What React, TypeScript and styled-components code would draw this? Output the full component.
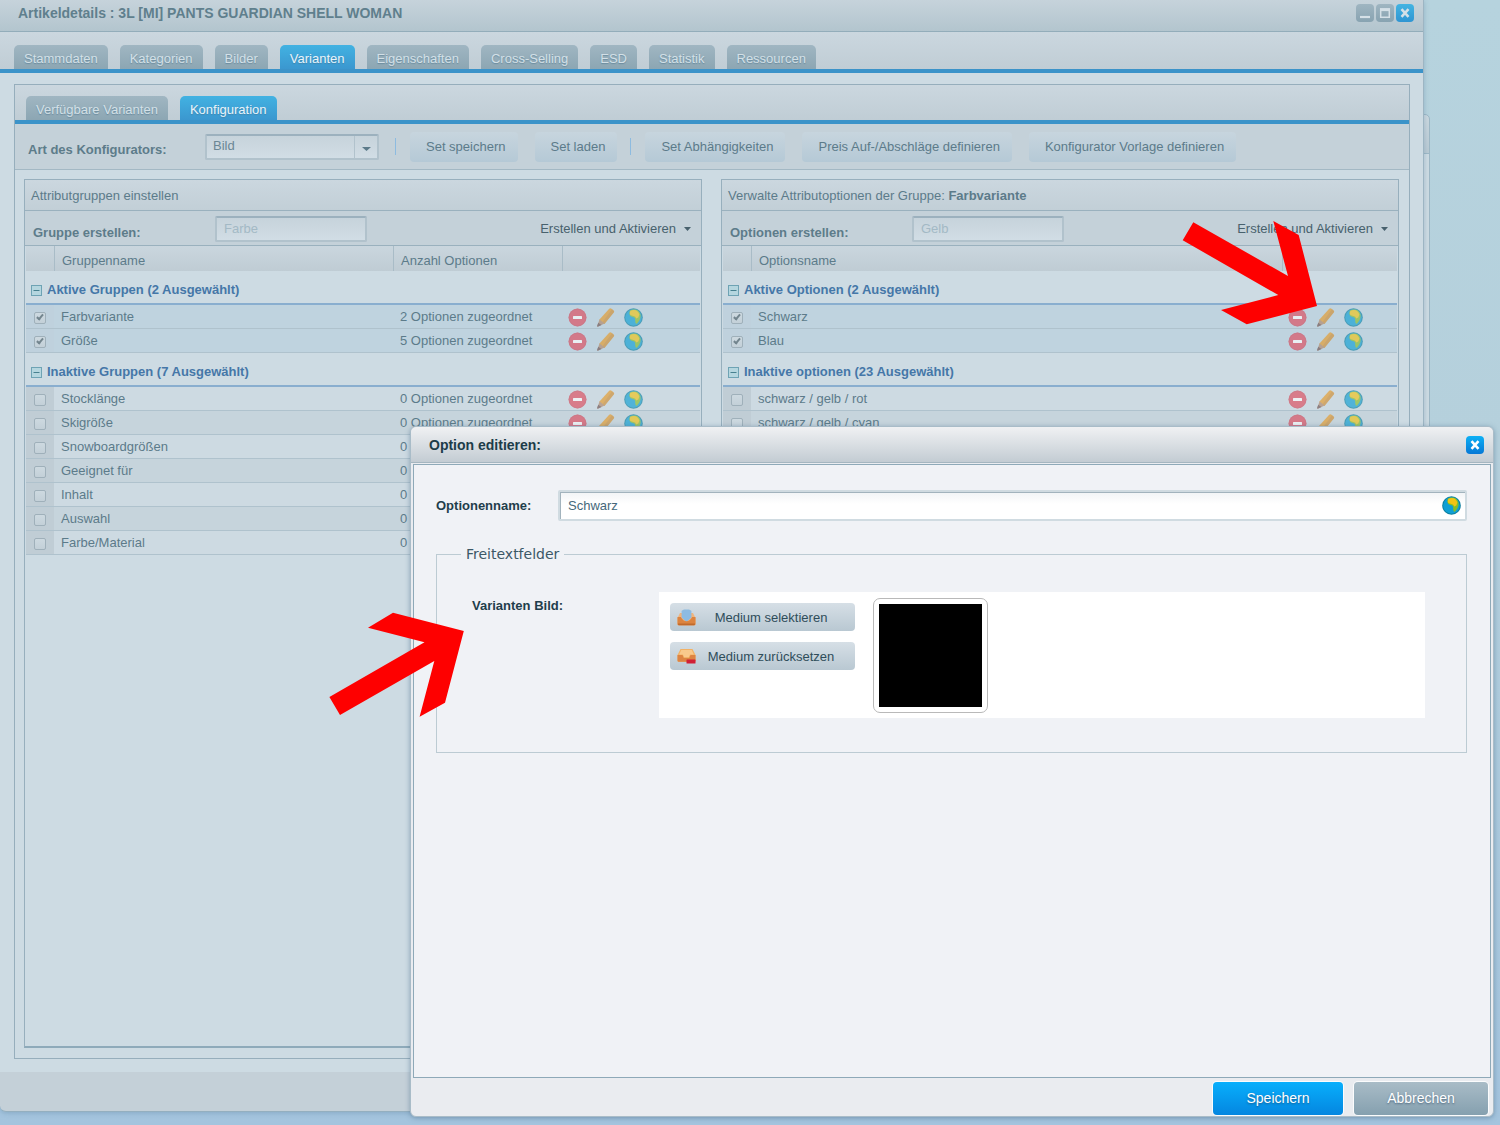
import React from "react";
import styled, { createGlobalStyle, css } from "styled-components";

const GlobalStyle = createGlobalStyle`
  *, *::before, *::after { box-sizing: border-box; }
  body {
    margin: 0;
    font-family: "Liberation Sans", Arial, Helvetica, sans-serif;
    font-size: 13px;
    line-height: 16px;
    color: #5c7b8a;
  }
  button, input, select { font: inherit; color: inherit; margin: 0; }
  button { cursor: pointer; border: 0; background: none; padding: 0; }
`;

/* ---------- Desktop and main window ---------- */

const Desktop = styled.div`
  position: relative;
  display: flex;
  flex-direction: column;
  min-height: 100vh;
  padding: 0 76px 13px 0;
  background: linear-gradient(#b6d3de 0%, #b5d0dc 40%, #a4c4de 100%);
  overflow: hidden;
`;

const BackWindow = styled.div`
  position: absolute;
  top: 114px;
  right: 70px;
  bottom: 120px;
  width: 60px;
  border: 1px solid #9db8c6;
  border-radius: 5px;
  background: linear-gradient(#cbd8e0, #b9cad3 38px, #9db8c6 38px, #9db8c6 39px, #cddbe3 39px);
`;

const Window = styled.main`
  position: relative;
  flex: 1;
  display: flex;
  flex-direction: column;
  border-right: 1px solid #9db5c3;
  border-bottom: 1px solid #94afbf;
  border-radius: 0 0 6px 6px;
  background: #c4d0d8;
  box-shadow: 0 1px 5px rgba(80, 120, 150, 0.35);
`;

const WindowHeader = styled.header`
  display: flex;
  align-items: center;
  height: 32px;
  padding: 0 9px 5px 18px;
  border-bottom: 1px solid #93adba;
  background: linear-gradient(#c6d3db, #b3c5ce);
`;

const WindowTitle = styled.h1`
  flex: 1;
  margin: 0;
  font-size: 14px;
  line-height: 16px;
  font-weight: bold;
  color: #5f7f8d;
`;

const ToolGroup = styled.div`
  display: flex;
  gap: 2px;
`;

const ToolButton = styled.button<{ $tone: "grey" | "blue" | "bright" }>`
  display: grid;
  place-items: center;
  width: 18px;
  height: 18px;
  border-radius: 4px;
  color: ${(p) => (p.$tone === "bright" ? "#fff" : "#d5e0e7")};
  background: ${(p) =>
    p.$tone === "grey"
      ? "linear-gradient(#9fb5c1, #88a3b1)"
      : p.$tone === "blue"
        ? "linear-gradient(#43b4e2, #2f95d2)"
        : "linear-gradient(#0cb0f5, #0678d6)"};
`;

/* ---------- Tabs ---------- */

const TabBar = styled.nav<{ $inner?: boolean }>`
  display: flex;
  align-items: flex-end;
  gap: 12px;
  height: ${(p) => (p.$inner ? 39 : 41)}px;
  padding-left: ${(p) => (p.$inner ? 11 : 14)}px;
  border-bottom: 4px solid #3b93c9;
  background: linear-gradient(#cbd7df, #c0cdd5);
`;

const Tab = styled.button<{ $active?: boolean }>`
  height: 24px;
  padding: 3px 10px 0;
  border-radius: 5px 5px 0 0;
  color: ${(p) => (p.$active ? "#e8f4fb" : "#d3e0e7")};
  background: ${(p) => (p.$active ? "linear-gradient(#42b2e2, #3b97cf)" : "linear-gradient(#a0b6c2, #8ca6b3)")};
  text-shadow: 0 1px 1px rgba(70, 110, 135, 0.5);
  white-space: nowrap;
`;

const WindowBody = styled.div`
  flex: 1;
  display: flex;
  padding: 11px 13px 13px 14px;
  background: #cddbe3;
`;

const Container = styled.section`
  flex: 1;
  display: flex;
  flex-direction: column;
  min-width: 0;
  border: 1px solid #96aebc;
`;

const WindowFooter = styled.footer`
  height: 39px;
`;

/* ---------- Configurator toolbar ---------- */

const Toolbar = styled.div`
  display: flex;
  align-items: center;
  height: 46px;
  padding: 0 13px;
  border-bottom: 1px solid #a3b8c4;
  background: #c4d1d9;
`;

const FieldLabel = styled.label<{ $width: number }>`
  flex: none;
  width: ${(p) => p.$width}px;
  padding-top: 7px;
  font-weight: bold;
  color: #5d7c8a;
`;

const fieldBox = css`
  border: 2px solid #b1c2cc;
  border-top-color: #9cb1be;
  border-radius: 2px;
  background: linear-gradient(#c6d3db, #d1dde5);
`;

const SelectBox = styled.div`
  position: relative;
  flex: none;
  width: 174px;
  margin-right: 16px;
  svg {
    position: absolute;
    right: 8px;
    top: 13px;
    pointer-events: none;
  }
`;

const Select = styled.select`
  ${fieldBox}
  display: block;
  appearance: none;
  width: 100%;
  height: 26px;
  padding: 0 30px 1px 6px;
  color: #6b8795;
  background: linear-gradient(90deg, transparent calc(100% - 23px), #b1c2cc calc(100% - 23px), #b1c2cc calc(100% - 22px), transparent calc(100% - 22px)),
    linear-gradient(#c6d3db, #d1dde5);
`;

const Separator = styled.span`
  flex: none;
  width: 1px;
  height: 17px;
  margin: 0 14px 0 0;
  background: #8dbbe0;
`;

const ToolbarGroup = styled.div`
  display: flex;
  flex: none;
  gap: 17px;
  margin-right: 13px;
`;

const ToolbarButton = styled.button`
  height: 30px;
  padding: 0 12px 0 16px;
  border-radius: 4px;
  background: linear-gradient(#c7d5de, #b5c9d6);
  white-space: nowrap;
`;

/* ---------- Grid panels ---------- */

const Panels = styled.div`
  flex: 1;
  display: grid;
  grid-template-columns: 1fr 1fr;
  gap: 19px;
  padding: 9px 10px 10px 9px;
`;

const Panel = styled.section`
  min-width: 0;
  border: 1px solid #97afbd;
  border-bottom: 2px solid #8eaaba;
  padding: 0 1px;
  background: #cddbe3;
`;

const PanelTitle = styled.h2`
  margin: 0 -1px;
  height: 31px;
  padding: 8px 6px 0;
  border-bottom: 1px solid #9ab1be;
  background: linear-gradient(#cbd7df, #c2cfd7);
  font-size: 13px;
  line-height: 16px;
  font-weight: normal;
`;

const PanelToolbar = styled.div`
  display: flex;
  align-items: center;
  height: 35px;
  margin: 0 -1px;
  padding: 2px 10px 0 8px;
  border-bottom: 1px solid #9ab1be;
  background: #c4d1d9;
`;

const TextInput = styled.input`
  ${fieldBox}
  width: 152px;
  height: 26px;
  padding: 0 7px 1px;
  &::placeholder {
    color: #a3b9c5;
    opacity: 1;
  }
`;

const MenuButton = styled.button`
  display: flex;
  align-items: center;
  gap: 8px;
  margin-left: auto;
  color: #48616d;
`;

const Grid = styled.table`
  width: 100%;
  table-layout: fixed;
  border-collapse: separate;
  border-spacing: 0;
  text-align: left;
`;

const HeadCell = styled.th`
  height: 25px;
  padding: 4px 0 0 7px;
  border-left: 1px solid #a9bcc7;
  background: linear-gradient(#cad6de, #bfccd4);
  font-weight: normal;
  &:first-child { border-left: 0; }
`;

const GroupCell = styled.th`
  height: 34px;
  padding: 6px 0 0 5px;
  border-bottom: 2px solid #89aecf;
`;

const GroupToggle = styled.button`
  display: flex;
  align-items: center;
  gap: 5px;
  font-weight: bold;
  color: #4577a8;
`;

const Row = styled.tr<{ $tone: "selected" | "odd" | "even" }>`
  background: ${(p) => ({ selected: "#bfd3df", odd: "#cddae2", even: "#c6d4dc" })[p.$tone]};
  td:first-child { background: ${(p) => (p.$tone === "selected" ? "#bfd1dd" : "#c0cdd5")}; }
`;

const Cell = styled.td<{ $indent?: number }>`
  height: 24px;
  padding: 0 0 0 ${(p) => p.$indent ?? 7}px;
  border-bottom: 1px solid #afc2cd;
  white-space: nowrap;
`;

const CheckBox = styled.input`
  appearance: none;
  display: grid;
  place-items: center;
  width: 12px;
  height: 12px;
  margin: 2px 0 0;
  border: 1px solid #9fb0ba;
  border-radius: 2px;
  background: linear-gradient(#cdd9e0, #c3d0d8);
  &:checked::after {
    content: "";
    width: 4px;
    height: 7px;
    margin-top: -2px;
    border: solid #73858e;
    border-width: 0 2px 2px 0;
    transform: rotate(40deg);
  }
`;

const Actions = styled.div`
  display: flex;
  gap: 9px;
  padding-top: 1px;
  opacity: 0.65;
  button { display: block; width: 19px; height: 19px; }
  svg { display: block; }
`;

/* ---------- Edit dialog ---------- */

const Dialog = styled.section`
  position: absolute;
  top: 426px;
  right: 6px;
  bottom: 8px;
  left: 410px;
  display: flex;
  flex-direction: column;
  padding: 0 2px;
  border: 1px solid #a9bcc8;
  border-radius: 6px;
  background: #eaecf0;
  box-shadow: 0 1px 5px rgba(70, 105, 135, 0.5);
  color: #25434f;
`;

const DialogHeader = styled.header`
  display: flex;
  align-items: center;
  height: 36px;
  margin: 0 -2px 1px;
  padding: 0 9px 0 18px;
  border-bottom: 1px solid #a5b6c0;
  border-radius: 6px 6px 0 0;
  background: linear-gradient(#f0f1f3, #c3ccd3);
`;

const DialogTitle = styled.h2`
  flex: 1;
  margin: 0;
  font-size: 14px;
  line-height: 16px;
  font-weight: bold;
  color: #1d3c49;
`;

const DialogBody = styled.div`
  flex: 1;
  padding: 25px 23px 0 22px;
  border: 1px solid #8ea9b8;
  background: #f0f2f6;
`;

const FormRow = styled.div`
  display: flex;
  align-items: center;
`;

const FormLabel = styled.label<{ $width: number }>`
  flex: none;
  width: ${(p) => p.$width}px;
  font-weight: bold;
  color: #1f3e4b;
`;

const NameField = styled.div`
  flex: 1;
  display: flex;
  align-items: center;
  height: 31px;
  padding-right: 4px;
  border: 2px solid #d0dbe1;
  border-radius: 2px;
  background: linear-gradient(#f1f4f6, #fff 12px);
  box-shadow: inset 1px 1px 0 #a2b3bd;
`;

const NameInput = styled.input`
  flex: 1;
  min-width: 0;
  height: 100%;
  padding: 0 8px;
  border: 0;
  outline: 0;
  background: none;
  color: #45687a;
`;

const IconButton = styled.button`
  display: block;
  svg { display: block; }
`;

const Fieldset = styled.fieldset`
  margin: 25px 0 0 0;
  padding: 30px 41px 34px 35px;
  border: 1px solid #bccbd3;
`;

const Legend = styled.legend`
  margin-left: -11px;
  padding: 0 5px;
  font-family: "DejaVu Sans", Verdana, sans-serif;
  font-size: 14px;
  line-height: 16px;
  color: #3c5866;
`;

const MediaRow = styled.div`
  display: flex;
`;

const MediaLabel = styled.span`
  flex: none;
  width: 187px;
  padding-top: 6px;
  font-weight: bold;
  color: #1f3e4b;
`;

const MediaField = styled.div`
  flex: 1;
  display: flex;
  gap: 18px;
  height: 126px;
  padding: 6px 11px;
  background: #fff;
`;

const MediaButtons = styled.div`
  display: flex;
  flex-direction: column;
  gap: 11px;
  width: 185px;
  padding-top: 5px;
`;

const MediaButton = styled.button`
  display: flex;
  align-items: center;
  height: 28px;
  padding: 1px 9px 0 7px;
  border-radius: 4px;
  background: linear-gradient(#d6dfe6, #b9c8d2);
  color: #2f4d5a;
  span { flex: 1; text-align: center; }
`;

const Thumbnail = styled.div`
  width: 115px;
  height: 115px;
  padding: 5px;
  border: 1px solid #b9b9b9;
  border-radius: 7px;
  background: #fff;
  &::before {
    content: "";
    display: block;
    height: 100%;
    background: #000;
  }
`;

const DialogFooter = styled.footer`
  display: flex;
  justify-content: flex-end;
  gap: 11px;
  height: 38px;
  padding: 4px 3px 0 0;
`;

const FooterButton = styled.button<{ $primary?: boolean }>`
  width: ${(p) => (p.$primary ? 130 : 134)}px;
  height: 33px;
  padding-bottom: 1px;
  border-radius: 4px;
  box-shadow: 0 0 0 1px #fbfcfd;
  background: ${(p) => (p.$primary ? "linear-gradient(#08affc, #0486e0)" : "linear-gradient(#a9bcc7, #85a0af)")};
  color: #fff;
  font-size: 14px;
  text-shadow: 0 1px 2px rgba(30, 60, 90, 0.6);
`;

const Pointer = styled.svg<{ $top: number; $left?: number; $right?: number }>`
  position: absolute;
  top: ${(p) => p.$top}px;
  ${(p) => (p.$left !== undefined ? `left: ${p.$left}px;` : `right: ${p.$right}px;`)}
  pointer-events: none;
  fill: #fe0000;
`;

/* ---------- Icons ---------- */

const CaretIcon = ({ size = 7 }: { size?: number }) => (
  <svg width={size} height="4" viewBox="0 0 8 4" preserveAspectRatio="none" aria-hidden="true">
    <path d="M0 0H8L4 4Z" fill="currentColor" />
  </svg>
);

const CloseIcon = () => (
  <svg width="10" height="10" viewBox="0 0 10 10" aria-hidden="true">
    <path d="M1.5 1.2 8.5 8.8M8.5 1.2 1.5 8.8" stroke="currentColor" strokeWidth="2.6" />
  </svg>
);

const MinimizeIcon = () => (
  <svg width="12" height="12" viewBox="0 0 12 12" aria-hidden="true">
    <path d="M1 10H11" stroke="currentColor" strokeWidth="2.2" />
  </svg>
);

const MaximizeIcon = () => (
  <svg width="12" height="12" viewBox="0 0 12 12" aria-hidden="true">
    <path d="M1.700 2H10.300V10.300H1.700Z" fill="none" stroke="currentColor" strokeWidth="1.500" />
    <path d="M1 2.700H11" stroke="currentColor" strokeWidth="2.800" />
  </svg>
);

const CollapseIcon = () => (
  <svg width="11" height="11" viewBox="0 0 11 11" aria-hidden="true">
    <rect x="0.5" y="0.5" width="10" height="10" fill="#b5d6df" stroke="#6ea3b4" />
    <path d="M2.500 5.500H8.500" stroke="#47808f" />
  </svg>
);

const RemoveIcon = () => (
  <svg width="19" height="19" viewBox="0 0 19 19" aria-hidden="true">
    <circle cx="9.500" cy="9.500" r="9" fill="#de4a5c" />
    <circle cx="9.500" cy="9.500" r="8.300" fill="none" stroke="#cc4a5c" strokeWidth="0.800" />
    <rect x="5" y="8" width="9" height="3" rx="0.500" fill="#fff" />
  </svg>
);

const PencilIcon = () => (
  <svg width="19" height="19" viewBox="0 0 19 19" aria-hidden="true">
    <path d="M13 1Q14.100-.2 15.500.8L17.600 2.400Q18.600 3.400 17.700 4.600L8.400 15.900 3 12Z" fill="#e59a2a" />
    <path d="M16 1.200 18.100 3.200 17.700 4.600 8.400 15.900 6.300 14.400Z" fill="#c88734" opacity="0.700" />
    <path d="M3.600 11.500 8.600 15.600 2.200 18.600Q1 18.800 1.200 17.700Z" fill="#b0876a" />
    <path d="M2.200 14.700 5.500 17.100 2.200 18.600Q1 18.800 1.200 17.700Z" fill="#6b5050" />
  </svg>
);

const GlobeIcon = () => (
  <svg width="19" height="19" viewBox="0 0 19 19" aria-hidden="true">
    <circle cx="9.500" cy="9.500" r="9.300" fill="#0c7f9f" />
    <circle cx="9.500" cy="9.500" r="8.300" fill="#0f9fd4" />
    <path d="M6 2.400Q9 .8 12.600 1.800 16 3.400 16.600 7.300 16.800 10.500 15.300 12.600L12.900 15.800Q11.200 16 11.300 13.600L11 10.600Q10.500 8.900 8.300 9 5.600 8.600 5.500 6.600 5 4.200 6 2.400Z" fill="#86bd28" />
    <path d="M6.200 3Q9 1.300 12 2.300 14.600 3.600 15.400 6.600L14.300 9.600 12.300 10.400Q11.600 8 9.400 7.900 6 7.800 5.800 5.600Z" fill="#f2c414" />
  </svg>
);

const TrayIcon = () => (
  <svg width="19" height="17" viewBox="0 0 19 17" aria-hidden="true">
    <path d="M3 4H16L18.500 9V15Q18.500 16.200 17.300 16.200H1.700Q.5 16.200.5 15V9Z" fill="#f0b47c" />
    <path d="M4.600 1.800 7 .6H12L14.400 1.800V8.500L9.500 13 4.600 8.500Z" fill="#8dbbe2" />
    <path d="M.5 8H3.800Q6 12.200 9.500 12.200T15.200 8H18.500V15Q18.500 16.200 17.300 16.200H1.700Q.5 16.200.5 15Z" fill="#dc8440" />
    <path d="M1 14.500H18V15.200Q17.800 16.200 17 16.200H2Q1 16.200 1 15Z" fill="#c06a2c" />
  </svg>
);

const TrayRemoveIcon = () => (
  <svg width="19" height="17" viewBox="0 0 19 17" aria-hidden="true">
    <path d="M3.500 1H15.500L18.500 7V12.500Q18.500 13.700 17.300 13.700H1.700Q.5 13.700.5 12.500V7Z" fill="#f2b266" />
    <path d="M4.300 2H14.700L16.800 6.600H13L12 9H7L6 6.600H2.200Z" fill="#f9c98c" />
    <path d="M.5 7H5.500L6.800 10H12.200L13.500 7H18.500V12.500Q18.500 13.700 17.300 13.700H1.700Q.5 13.700.5 12.500Z" fill="#dd8443" />
    <rect x="9.500" y="11.500" width="9" height="4" rx="0.600" fill="#d01f35" />
  </svg>
);

/* ---------- Data ---------- */

const mainTabs = ["Stammdaten", "Kategorien", "Bilder", "Varianten", "Eigenschaften", "Cross-Selling", "ESD", "Statistik", "Ressourcen"];
const innerTabs = ["Verfügbare Varianten", "Konfiguration"];

type Item = { name: string; count?: number };
type Group = { title: string; active: boolean; items: Item[] };

const attributeGroups: Group[] = [
  {
    title: "Aktive Gruppen (2 Ausgewählt)",
    active: true,
    items: [
      { name: "Farbvariante", count: 2 },
      { name: "Größe", count: 5 },
    ],
  },
  {
    title: "Inaktive Gruppen (7 Ausgewählt)",
    active: false,
    items: ["Stocklänge", "Skigröße", "Snowboardgrößen", "Geeignet für", "Inhalt", "Auswahl", "Farbe/Material"].map((name) => ({ name, count: 0 })),
  },
];

const optionGroups: Group[] = [
  { title: "Aktive Optionen (2 Ausgewählt)", active: true, items: [{ name: "Schwarz" }, { name: "Blau" }] },
  { title: "Inaktive optionen (23 Ausgewählt)", active: false, items: [{ name: "schwarz / gelb / rot" }, { name: "schwarz / gelb / cyan" }] },
];

/* ---------- Composition ---------- */

const RowActions = () => (
  <Actions>
    <button type="button" aria-label="Löschen"><RemoveIcon /></button>
    <button type="button" aria-label="Bearbeiten"><PencilIcon /></button>
    <button type="button" aria-label="Übersetzen"><GlobeIcon /></button>
  </Actions>
);

const Column = styled.col<{ $width?: number }>`
  width: ${(p) => (p.$width ? `${p.$width}px` : "auto")};
`;

function GroupedGrid({ nameHeader, countHeader, groups }: { nameHeader: string; countHeader?: string; groups: Group[] }) {
  return (
    <Grid>
      <colgroup>
        <Column $width={28} />
        <Column />
        {countHeader && <Column $width={169} />}
        <Column $width={countHeader ? 138 : 115} />
      </colgroup>
      <thead>
        <tr>
          <HeadCell />
          <HeadCell scope="col">{nameHeader}</HeadCell>
          {countHeader && <HeadCell scope="col">{countHeader}</HeadCell>}
          <HeadCell />
        </tr>
      </thead>
      {groups.map((group) => (
        <tbody key={group.title}>
          <tr>
            <GroupCell colSpan={countHeader ? 4 : 3} scope="rowgroup">
              <GroupToggle type="button"><CollapseIcon />{group.title}</GroupToggle>
            </GroupCell>
          </tr>
          {group.items.map((item, i) => (
            <Row key={item.name} $tone={group.active ? "selected" : i % 2 ? "even" : "odd"}>
              <Cell $indent={8}>
                <CheckBox type="checkbox" defaultChecked={group.active} aria-label={item.name} />
              </Cell>
              <Cell>{item.name}</Cell>
              {countHeader && <Cell>{item.count} Optionen zugeordnet</Cell>}
              <Cell $indent={6}><RowActions /></Cell>
            </Row>
          ))}
        </tbody>
      ))}
    </Grid>
  );
}

function CreateBar({ id, label, placeholder }: { id: string; label: string; placeholder: string }) {
  return (
    <PanelToolbar>
      <FieldLabel htmlFor={id} $width={182}>{label}</FieldLabel>
      <TextInput id={id} type="text" placeholder={placeholder} />
      <MenuButton type="button">Erstellen und Aktivieren<CaretIcon /></MenuButton>
    </PanelToolbar>
  );
}

function EditDialog() {
  return (
    <Dialog role="dialog" aria-labelledby="dialog-title">
      <DialogHeader>
        <DialogTitle id="dialog-title">Option editieren:</DialogTitle>
        <ToolButton type="button" $tone="bright" aria-label="Schließen"><CloseIcon /></ToolButton>
      </DialogHeader>
      <DialogBody>
        <FormRow>
          <FormLabel htmlFor="option-name" $width={122}>Optionenname:</FormLabel>
          <NameField>
            <NameInput id="option-name" type="text" defaultValue="Schwarz" />
            <IconButton type="button" aria-label="Übersetzen"><GlobeIcon /></IconButton>
          </NameField>
        </FormRow>
        <Fieldset>
          <Legend>Freitextfelder</Legend>
          <MediaRow role="group" aria-labelledby="media-label">
            <MediaLabel id="media-label">Varianten Bild:</MediaLabel>
            <MediaField>
              <MediaButtons>
                <MediaButton type="button"><TrayIcon /><span>Medium selektieren</span></MediaButton>
                <MediaButton type="button"><TrayRemoveIcon /><span>Medium zurücksetzen</span></MediaButton>
              </MediaButtons>
              <Thumbnail />
            </MediaField>
          </MediaRow>
        </Fieldset>
      </DialogBody>
      <DialogFooter>
        <FooterButton type="button" $primary>Speichern</FooterButton>
        <FooterButton type="button">Abbrechen</FooterButton>
      </DialogFooter>
    </Dialog>
  );
}

export default function App() {
  return (
    <>
      <GlobalStyle />
      <Desktop>
        <BackWindow />
        <Window>
          <WindowHeader>
            <WindowTitle>Artikeldetails : 3L [MI] PANTS GUARDIAN SHELL WOMAN</WindowTitle>
            <ToolGroup>
              <ToolButton type="button" $tone="grey" aria-label="Minimieren"><MinimizeIcon /></ToolButton>
              <ToolButton type="button" $tone="grey" aria-label="Maximieren"><MaximizeIcon /></ToolButton>
              <ToolButton type="button" $tone="blue" aria-label="Schließen"><CloseIcon /></ToolButton>
            </ToolGroup>
          </WindowHeader>
          <TabBar>
            {mainTabs.map((tab) => <Tab key={tab} type="button" $active={tab === "Varianten"}>{tab}</Tab>)}
          </TabBar>
          <WindowBody>
            <Container>
              <TabBar $inner>
                {innerTabs.map((tab) => <Tab key={tab} type="button" $active={tab === "Konfiguration"}>{tab}</Tab>)}
              </TabBar>
              <Toolbar>
                <FieldLabel htmlFor="configurator-type" $width={177}>Art des Konfigurators:</FieldLabel>
                <SelectBox>
                  <Select id="configurator-type" defaultValue="Bild"><option>Bild</option></Select>
                  <CaretIcon size={9} />
                </SelectBox>
                <Separator />
                <ToolbarGroup>
                  <ToolbarButton type="button">Set speichern</ToolbarButton>
                  <ToolbarButton type="button">Set laden</ToolbarButton>
                </ToolbarGroup>
                <Separator />
                <ToolbarGroup>
                  <ToolbarButton type="button">Set Abhängigkeiten</ToolbarButton>
                  <ToolbarButton type="button">Preis Auf-/Abschläge definieren</ToolbarButton>
                  <ToolbarButton type="button">Konfigurator Vorlage definieren</ToolbarButton>
                </ToolbarGroup>
              </Toolbar>
              <Panels>
                <Panel>
                  <PanelTitle>Attributgruppen einstellen</PanelTitle>
                  <CreateBar id="new-group" label="Gruppe erstellen:" placeholder="Farbe" />
                  <GroupedGrid nameHeader="Gruppenname" countHeader="Anzahl Optionen" groups={attributeGroups} />
                </Panel>
                <Panel>
                  <PanelTitle>Verwalte Attributoptionen der Gruppe: <b>Farbvariante</b></PanelTitle>
                  <CreateBar id="new-option" label="Optionen erstellen:" placeholder="Gelb" />
                  <GroupedGrid nameHeader="Optionsname" groups={optionGroups} />
                </Panel>
              </Panels>
            </Container>
          </WindowBody>
          <WindowFooter />
        </Window>
        <EditDialog />
        <Pointer $top={220} $right={182} width="136" height="106" viewBox="0 0 136 106" aria-hidden="true">
          <path d="M11.300 2.300 106 56 91.300 1 116.700 15 135 86 64.700 104.300 39 90 96.300 75 0.700 20.300Z" />
        </Pointer>
        <Pointer $top={612} $left={329} width="136" height="106" viewBox="0 0 136 106" aria-hidden="true">
          <path d="M64 0.800 134.800 19 116 90.700 90.600 104.700 105.300 49 11 103 0.400 85 95.500 30.300 39 15.700Z" />
        </Pointer>
      </Desktop>
    </>
  );
}
